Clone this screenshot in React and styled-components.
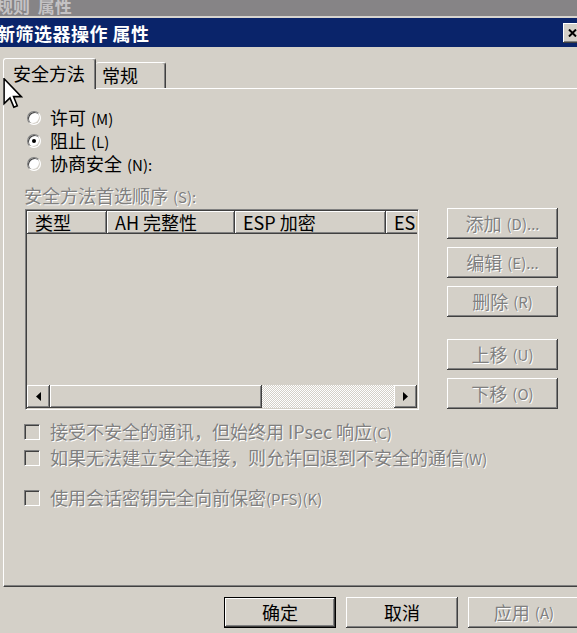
import React from 'react';
import styled, { createGlobalStyle, css } from 'styled-components';

const FACE = '#d4d0c8';
const FONT = `"Noto Sans CJK SC", "Noto Sans", sans-serif`;

const Global = createGlobalStyle`
  html, body { margin: 0; padding: 0; background: ${FACE}; overflow: hidden; }
  body { font-family: ${FONT}; }
  #root { width: 577px; height: 633px; }
`;

const raised = css`
  background: ${FACE};
  box-shadow: inset -1px -1px #404040, inset 1px 1px #fff, inset -2px -2px #808080;
`;

const disabledText = css`
  color: #808080;
  text-shadow: 1px 1px 0 #fff;
`;

const Frame = styled.div`
  position: relative;
  width: 577px;
  height: 633px;
  overflow: hidden;
  display: flex;
  flex-direction: column;
  background: ${FACE};
  font-family: ${FONT};
  font-size: 18px;
  line-height: 23px;
  color: #000;
`;

const BackStrip = styled.div`
  flex: none;
  height: 16px;
  background: #868486;
  border-bottom: 2px solid #d8d5cf;
  overflow: hidden;
`;

const BackTitle = styled.div`
  margin-top: -4px;
  margin-left: -4px;
  font-weight: bold;
  font-size: 17px;
  line-height: 19px;
  color: #c4c2c4;
  white-space: pre;
`;

const TitleBar = styled.div`
  flex: none;
  height: 29px;
  background: #0a246a;
  display: flex;
  align-items: center;
  justify-content: space-between;
`;

const TitleText = styled.div`
  margin-left: -3px;
  color: #fff;
  font-weight: bold;
  font-size: 18px;
  line-height: 24px;
  letter-spacing: 0.5px;
  white-space: pre;
`;

const CloseBtn = styled.div`
  ${raised};
  width: 18px;
  height: 20px;
  margin-right: -4px;
  display: flex;
  align-items: center;
  justify-content: center;
`;

const Body = styled.div`
  flex: 1;
  display: flex;
  flex-direction: column;
  padding: 11px 0 0 3px;
`;

const TabRow = styled.div`
  display: flex;
  align-items: flex-end;
  height: 30px;
  position: relative;
  z-index: 1;
`;

const Tab = styled.div`
  box-sizing: border-box;
  background: ${FACE};
  border-top: 1px solid #fff;
  border-left: 1px solid #fff;
  border-right: 1px solid #404040;
  box-shadow: inset -1px 0 #808080;
  border-radius: 3px 3px 0 0;
  display: flex;
  align-items: center;
  white-space: nowrap;
  ${(p) =>
    p.$active
      ? css`
          width: 93px;
          height: 31px;
          margin-bottom: -1px;
          padding: 0 0 2px 9px;
        `
      : css`
          width: 70px;
          height: 26px;
          padding: 0 0 0 6px;
          border-left: none;
        `}
`;

const Panel = styled.div`
  box-sizing: border-box;
  height: 499px;
  margin-right: -10px;
  border-top: 1px solid #fff;
  border-left: 1px solid #fff;
  border-bottom: 1px solid #404040;
  box-shadow: inset 0 -1px #808080;
  padding: 17px 0 0 20px;
  display: flex;
  flex-direction: column;
`;

const RadioGroup = styled.div`
  display: flex;
  flex-direction: column;
  padding-left: 3px;
`;

const Row = styled.div`
  display: flex;
  align-items: center;
  height: 23px;
  line-height: 23px;
  gap: ${(p) => p.$gap || 9}px;
  white-space: nowrap;
  ${(p) => p.$disabled && disabledText};
  margin-top: ${(p) => p.$mt || 0}px;
`;

const Key = styled.span`
  font-size: 15px;
  margin-left: ${(p) => p.$ml || 0}px;
`;

const RadioDot = styled.span`
  box-sizing: border-box;
  position: relative;
  width: 14px;
  height: 14px;
  border-radius: 50%;
  border: 1px solid;
  border-color: #808080 #fff #fff #808080;
  box-shadow: inset 1px 1px #404040, inset -1px -1px ${FACE};
  background: #fff;
  flex: none;
  &::after {
    content: '';
    display: ${(p) => (p.$checked ? 'block' : 'none')};
    position: absolute;
    left: 4px;
    top: 4px;
    width: 4px;
    height: 4px;
    border-radius: 50%;
    background: #000;
  }
`;

const CheckBox = styled.span`
  box-sizing: border-box;
  width: 16px;
  height: 16px;
  border: 1px solid;
  border-color: #808080 #fff #fff #808080;
  box-shadow: inset 1px 1px #404040, inset -1px -1px ${FACE};
  background: ${FACE};
  flex: none;
`;

const GroupLabel = styled.div`
  margin-top: 9px;
  height: 23px;
  line-height: 23px;
  white-space: nowrap;
  ${disabledText};
`;

const ListArea = styled.div`
  display: flex;
  align-items: flex-start;
  gap: 28px;
  margin-top: 2px;
`;

const ListBox = styled.div`
  box-sizing: border-box;
  margin-left: 1px;
  width: 394px;
  height: 201px;
  border: 1px solid;
  border-color: #808080 #fff #fff #808080;
  box-shadow: inset 1px 1px #404040, inset -1px -1px ${FACE};
  padding: 1px;
  display: flex;
  flex-direction: column;
  overflow: hidden;
`;

const Header = styled.div`
  display: flex;
  height: 23px;
  flex: none;
  overflow: hidden;
`;

const HeaderCell = styled.div`
  ${raised};
  box-sizing: border-box;
  flex: ${(p) => (p.$w ? `0 0 ${p.$w}px` : '1 0 auto')};
  width: ${(p) => (p.$w ? `${p.$w}px` : 'auto')};
  padding-left: 8px;
  line-height: 23px;
  white-space: nowrap;
  overflow: hidden;
`;

const ListBody = styled.div`
  flex: 1;
`;

const ScrollBar = styled.div`
  display: flex;
  height: 23px;
  flex: none;
`;

const ScrollBtn = styled.div`
  ${raised};
  width: ${(p) => p.$w}px;
  flex: none;
  display: flex;
  align-items: center;
  justify-content: center;
`;

const Track = styled.div`
  flex: 1;
  background: repeating-conic-gradient(#fff 0 25%, ${FACE} 0 50%) 0 0 / 2px 2px;
`;

const SideButtons = styled.div`
  display: flex;
  flex-direction: column;
  gap: 8px;
  margin-top: -1px;
`;

const Button = styled.div`
  ${raised};
  box-sizing: border-box;
  width: ${(p) => p.$w || 111}px;
  height: 31px;
  flex: none;
  display: flex;
  align-items: center;
  justify-content: center;
  white-space: nowrap;
  margin-top: ${(p) => p.$mt || 0}px;
  ${(p) => p.$disabled && disabledText};
  ${(p) =>
    p.$default &&
    css`
      border: 1px solid #000;
    `}
`;

const Checks = styled.div`
  display: flex;
  flex-direction: column;
  gap: 3px;
  margin-top: 10px;
`;

const Footer = styled.div`
  display: flex;
  justify-content: flex-end;
  gap: 10px;
  padding-top: 10px;
  margin-right: -3px;
`;

const Cursor = styled.svg`
  position: absolute;
  z-index: 10;
  left: 3px;
  top: 78px;
`;

const Arrow = ({ dir }) => (
  <svg width="5" height="9" viewBox="0 0 5 9">
    <polygon points={dir === 'left' ? '5,0 0,4.5 5,9' : '0,0 5,4.5 0,9'} fill="#000" />
  </svg>
);

export default function App() {
  return (
    <>
      <Global />
      <Frame>
        <BackStrip>
          <BackTitle>规则  属性</BackTitle>
        </BackStrip>
        <TitleBar>
          <TitleText>新筛选器操作 属性</TitleText>
          <CloseBtn>
            <svg width="9" height="8" viewBox="0 0 9 8">
              <path d="M1 0.5 L8 7.5 M8 0.5 L1 7.5" stroke="#000" strokeWidth="2" />
            </svg>
          </CloseBtn>
        </TitleBar>
        <Body>
          <TabRow>
            <Tab $active>安全方法</Tab>
            <Tab>常规</Tab>
          </TabRow>
          <Panel>
            <RadioGroup>
              <Row>
                <RadioDot />
                <span>许可<Key $ml={5}>(M)</Key></span>
              </Row>
              <Row>
                <RadioDot $checked />
                <span>阻止<Key $ml={5}>(L)</Key></span>
              </Row>
              <Row>
                <RadioDot />
                <span>协商安全<Key $ml={5}>(N):</Key></span>
              </Row>
            </RadioGroup>
            <GroupLabel>安全方法首选顺序<Key $ml={5}>(S):</Key></GroupLabel>
            <ListArea>
              <ListBox>
                <Header>
                  <HeaderCell $w={80}>类型</HeaderCell>
                  <HeaderCell $w={128}>AH 完整性</HeaderCell>
                  <HeaderCell $w={151}>ESP 加密</HeaderCell>
                  <HeaderCell>ESP 完整性</HeaderCell>
                </Header>
                <ListBody />
                <ScrollBar>
                  <ScrollBtn $w={23}>
                    <Arrow dir="left" />
                  </ScrollBtn>
                  <ScrollBtn $w={212} />
                  <Track />
                  <ScrollBtn $w={23}>
                    <Arrow dir="right" />
                  </ScrollBtn>
                </ScrollBar>
              </ListBox>
              <SideButtons>
                <Button $disabled>添加<Key $ml={5}>(D)...</Key></Button>
                <Button $disabled>编辑<Key $ml={5}>(E)...</Key></Button>
                <Button $disabled>删除<Key $ml={5}>(R)</Key></Button>
                <Button $disabled $mt={14}>上移<Key $ml={5}>(U)</Key></Button>
                <Button $disabled>下移<Key $ml={5}>(O)</Key></Button>
              </SideButtons>
            </ListArea>
            <Checks>
              <Row $disabled $gap={10}>
                <CheckBox />
                <span>接受不安全的通讯，但始终用 IPsec 响应<Key>(C)</Key></span>
              </Row>
              <Row $disabled $gap={10}>
                <CheckBox />
                <span>如果无法建立安全连接，则允许回退到不安全的通信<Key>(W)</Key></span>
              </Row>
              <Row $disabled $gap={10} $mt={14}>
                <CheckBox />
                <span>使用会话密钥完全向前保密<Key>(PFS)(K)</Key></span>
              </Row>
            </Checks>
          </Panel>
          <Footer>
            <Button $w={112} $default>确定</Button>
            <Button $w={112}>取消</Button>
            <Button $w={112} $disabled>应用<Key $ml={5}>(A)</Key></Button>
          </Footer>
        </Body>
        <Cursor width="20" height="31" viewBox="0 0 12.5 20">
          <path
            d="M0.5 0.5 L0.5 16.5 L4.3 12.8 L6.8 18.8 L9 17.9 L6.6 12 L11.6 12 Z"
            fill="#fff"
            stroke="#000"
            strokeWidth="1"
            strokeLinejoin="miter"
          />
        </Cursor>
      </Frame>
    </>
  );
}
